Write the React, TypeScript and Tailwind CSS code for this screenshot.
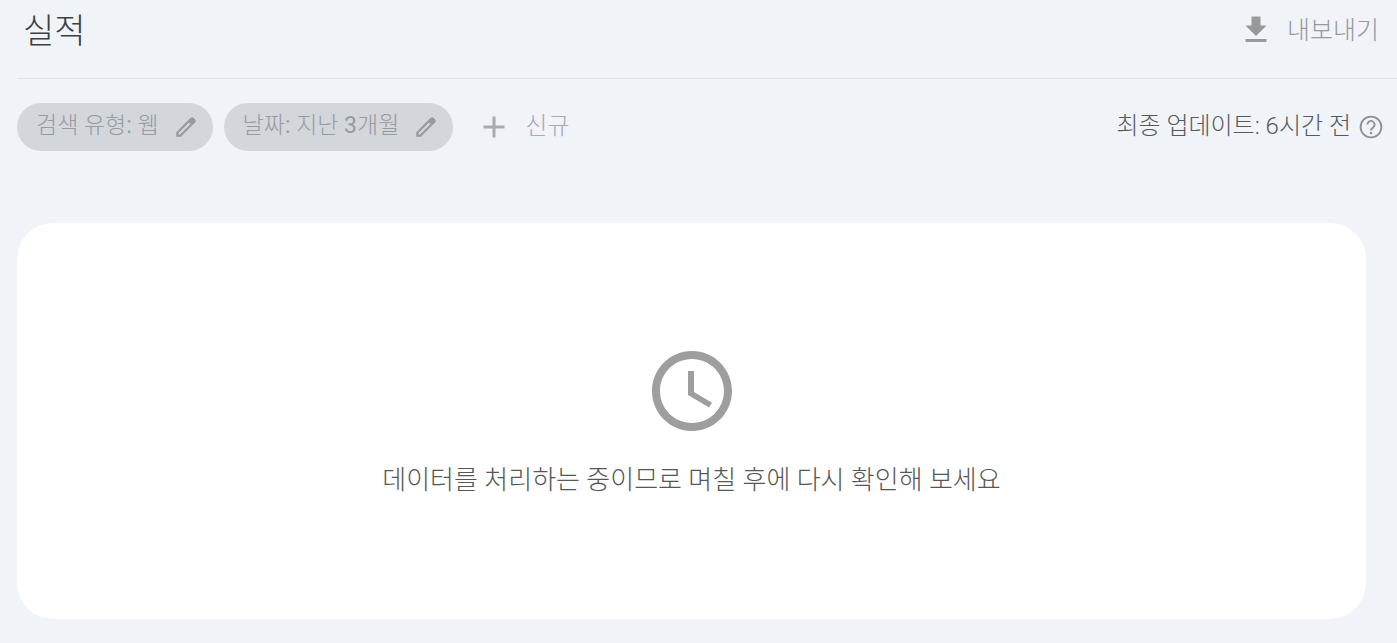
import type { ReactNode } from "react";
import { MdDownload, MdAdd, MdAccessTime } from "react-icons/md";

function EditIcon() {
  return (
    <svg viewBox="0 -960 960 960" className="size-[26px]" fill="currentColor" aria-hidden="true">
      <path d="M200-200h57l391-391-57-57-391 391v57Zm-80 80v-170l528-527q12-11 26.500-17t30.500-6q16 0 31 6t26 18l55 56q12 11 17.500 26t5.500 30q0 16-5.500 30.500T817-647L290-120H120Z" />
    </svg>
  );
}

function HelpIcon() {
  return (
    <svg viewBox="0 0 24 24" className="size-6" fill="none" stroke="currentColor" strokeWidth="1.900" aria-hidden="true">
      <circle cx="12" cy="12" r="10.400" />
      <path d="M8.400 9.600a3.600 3.600 0 1 1 5.900 2.700c-1.300 1.100-2.300 1.700-2.300 3.300" />
      <path d="M12 16.900v2.200" strokeWidth="2.200" />
    </svg>
  );
}

function FilterChip({ name, children }: { name: string; children: ReactNode }) {
  return (
    <button type="button" className="flex h-12 items-center gap-[14px] rounded-full bg-[#d3d6db] pr-[14px] pl-[19px] text-[23px] text-[#989b9d]">
      <span className="pb-0.5">
        {name}
        <span className="font-normal">:</span> {children}
      </span>
      <EditIcon />
    </button>
  );
}

export default function App() {
  return (
    <div className="min-h-screen bg-[#f0f3f8] pb-6 pl-[17px] font-['Roboto','Noto_Sans_CJK_KR',sans-serif] font-light">
      <header className="flex h-[79px] items-start justify-between border-b border-[#dfe1e3] pt-2 pr-[18px] pl-[6px]">
        <h1 className="text-[34px] leading-[46px] text-[#3c4043]">실적</h1>
        <button type="button" className="flex h-11 items-center gap-[13px] text-[25px] text-[#97999b]">
          <MdDownload className="size-9" aria-hidden="true" />
          <span className="pt-0.5">내보내기</span>
        </button>
      </header>
      <div className="flex items-center justify-between pt-6 pr-[14px]">
        <div className="flex items-center gap-[11px]">
          <FilterChip name="검색 유형">웹</FilterChip>
          <FilterChip name="날짜">
            지난 <span className="font-normal">3</span>개월
          </FilterChip>
          <button type="button" className="ml-3 flex items-center gap-[13px] text-2xl text-[#a7aaae]">
            <MdAdd className="size-9" aria-hidden="true" />
            <span className="pb-0.5">신규</span>
          </button>
        </div>
        <div className="flex items-center gap-2 text-2xl text-[#56595c]">
          <span className="pb-0.5">최종 업데이트: 6시간 전</span>
          <button type="button" aria-label="도움말" className="text-[#8f9193]">
            <HelpIcon />
          </button>
        </div>
      </div>
      <main className="mt-[72px] mr-[31px] flex h-[396px] flex-col items-center rounded-[36px] bg-white pt-[120px]">
        <MdAccessTime className="size-24 text-[#9e9e9e]" aria-hidden="true" />
        <p className="mt-6 text-[26px] leading-[34px] text-[#565656]">데이터를 처리하는 중이므로 며칠 후에 다시 확인해 보세요</p>
      </main>
    </div>
  );
}
